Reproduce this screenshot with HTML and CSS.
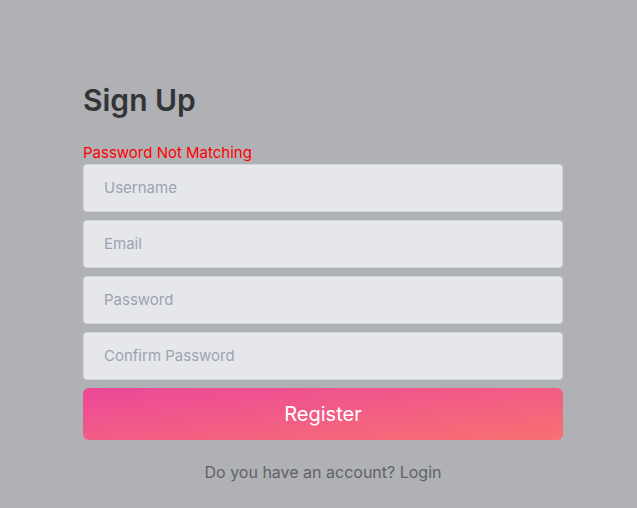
FILE: index.html
```html
<!DOCTYPE html>
<html lang="en">
<head>
<meta charset="utf-8">
<title>Sign Up</title>
<link rel="stylesheet" href="styles.css">
</head>
<body>
<main class="page">
  <form class="card">
    <h1 class="title">Sign Up</h1>
    <p class="error">Password Not Matching</p>
    <div class="fields">
      <input class="field" type="text" placeholder="Username">
      <input class="field" type="email" placeholder="Email">
      <input class="field" type="password" placeholder="Password">
      <input class="field" type="password" placeholder="Confirm Password">
      <button class="submit" type="button">Register</button>
    </div>
    <p class="switch">Do you have an account? Login</p>
  </form>
</main>
</body>
</html>
```

FILE: styles.css
```css
html, body {
  margin: 0;
  padding: 0;
  height: 100%;
}
body {
  background: #afb1b5;
  font-family: Inter, "Noto Sans", sans-serif;
}
.page {
  display: flex;
  justify-content: center;
  padding: 82px 0 0 9px;
}
.card {
  width: 480px;
  display: flex;
  flex-direction: column;
}
.title {
  margin: 0 0 23px;
  font-size: 30px;
  line-height: 36px;
  font-weight: 600;
  color: #333436;
}
.error {
  margin: 0;
  font-size: 15px;
  line-height: 23px;
  color: #ff0000;
}
.fields {
  display: flex;
  flex-direction: column;
  gap: 8px;
}
.field {
  box-sizing: border-box;
  height: 48px;
  width: 100%;
  padding: 0 20px 2px;
  border: 1px solid #d1d5db;
  border-radius: 4px;
  background: #e5e7eb;
  font-family: inherit;
  font-size: 15px;
  color: #374151;
  outline: none;
}
.field::placeholder {
  color: #9ca3af;
}
.submit {
  height: 52px;
  width: 100%;
  border: none;
  border-radius: 6px;
  background: linear-gradient(to bottom right, #ec4899, #f87171);
  color: #ffffff;
  font-family: inherit;
  font-size: 20px;
  cursor: pointer;
}
.switch {
  margin: 20px 0 0;
  text-align: center;
  font-size: 16px;
  line-height: 24px;
  color: #616266;
}
```
